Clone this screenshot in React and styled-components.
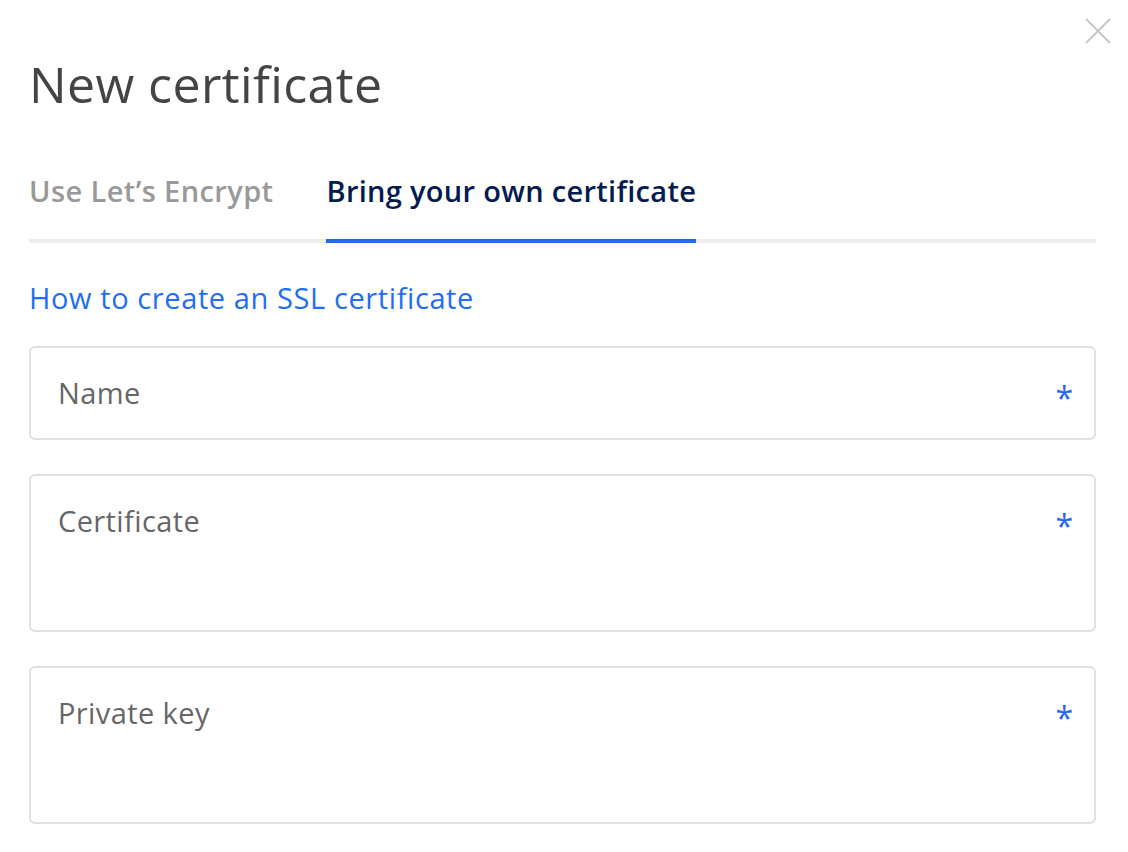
import React from 'react';
import styled, { createGlobalStyle } from 'styled-components';

const GlobalStyle = createGlobalStyle`
  body {
    margin: 0;
    background: #fff;
    font-family: "Open Sans", Lato, sans-serif;
  }
`;

const Modal = styled.div`
  position: relative;
  padding: 48px 32px 0 29px;
  box-sizing: border-box;
  width: 1128px;
  min-height: 852px;
`;

const CloseButton = styled.button`
  position: absolute;
  top: 17px;
  right: 16px;
  width: 28px;
  height: 28px;
  padding: 0;
  border: 0;
  background: transparent;
  cursor: pointer;
`;

const Title = styled.h1`
  margin: 0;
  font-size: 50px;
  font-weight: 400;
  line-height: 72px;
  letter-spacing: 0.4px;
  color: #444;
`;

const Tabs = styled.div`
  display: flex;
  gap: 53px;
  margin-top: 52px;
  border-bottom: 4px solid #eeeeee;
`;

const Tab = styled.div`
  font-size: 29px;
  line-height: 37px;
  font-weight: 600;
  letter-spacing: ${(p) => (p.$active ? '0.3px' : '0.4px')};
  color: ${(p) => (p.$active ? '#031b4e' : '#999')};
  padding-bottom: 30px;
  margin-bottom: -4px;
  border-bottom: 4px solid ${(p) => (p.$active ? '#2468f2' : 'transparent')};
  cursor: pointer;
`;

const HelpLink = styled.a`
  display: inline-block;
  margin-top: 36px;
  font-size: 29px;
  line-height: 37px;
  letter-spacing: 0.6px;
  color: #1f6ef5;
  text-decoration: none;
`;

const Form = styled.div`
  display: flex;
  flex-direction: column;
  gap: 34px;
  margin-top: 30px;
`;

const Field = styled.div`
  display: flex;
  justify-content: space-between;
  align-items: flex-start;
  height: ${(p) => p.$height}px;
  box-sizing: border-box;
  padding: 28px 21px 0 27px;
  border: 2px solid #e0e0e0;
  border-radius: 6px;
`;

const Label = styled.span`
  font-size: 29px;
  line-height: 34px;
  letter-spacing: 0.4px;
  color: #666;
`;

const Required = styled.span`
  font-size: 32px;
  line-height: 34px;
  color: #2468f2;
  transform: translateY(5px);
`;

const fields = [
  { label: 'Name', height: 94 },
  { label: 'Certificate', height: 158 },
  { label: 'Private key', height: 158 },
];

export default function App() {
  return (
    <>
      <GlobalStyle />
      <Modal>
        <CloseButton aria-label="Close">
          <svg width="28" height="28" viewBox="0 0 28 28">
            <path d="M2 2L26 26M26 2L2 26" stroke="#c8c8c8" strokeWidth="2" fill="none" />
          </svg>
        </CloseButton>
        <Title>New certificate</Title>
        <Tabs>
          <Tab>Use Let’s Encrypt</Tab>
          <Tab $active>Bring your own certificate</Tab>
        </Tabs>
        <HelpLink href="#">How to create an SSL certificate</HelpLink>
        <Form>
          {fields.map((f) => (
            <Field key={f.label} $height={f.height}>
              <Label>{f.label}</Label>
              <Required>*</Required>
            </Field>
          ))}
        </Form>
      </Modal>
    </>
  );
}
